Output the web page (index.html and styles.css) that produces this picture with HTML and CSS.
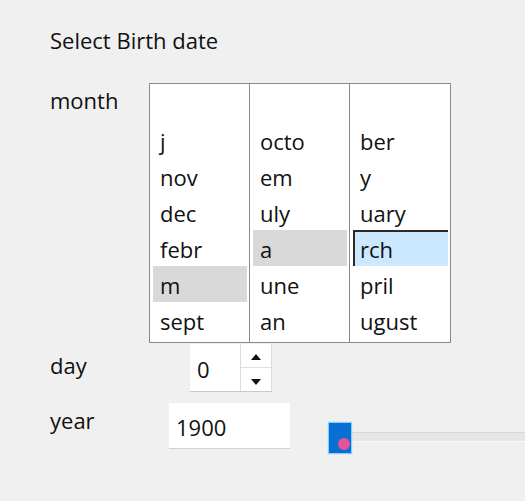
FILE: index.html
```html
<!DOCTYPE html>
<html>
<head>
<meta charset="utf-8">
<link rel="stylesheet" href="styles.css">
</head>
<body>
<div class="page">
  <div class="title">Select Birth date</div>
  <div class="month-row">
    <div class="label month-label">month</div>
    <div class="list">
      <div class="col">
        <div class="item">j</div>
        <div class="item">nov</div>
        <div class="item">dec</div>
        <div class="item">febr</div>
        <div class="item sel">m</div>
        <div class="item">sept</div>
      </div>
      <div class="col">
        <div class="item">octo</div>
        <div class="item">em</div>
        <div class="item">uly</div>
        <div class="item sel">a</div>
        <div class="item">une</div>
        <div class="item">an</div>
      </div>
      <div class="col last">
        <div class="item">ber</div>
        <div class="item">y</div>
        <div class="item">uary</div>
        <div class="item focus">rch</div>
        <div class="item">pril</div>
        <div class="item">ugust</div>
      </div>
    </div>
  </div>
  <div class="day-row">
    <div class="label">day</div>
    <div class="spin">
      <div class="spin-value">0</div>
      <div class="spin-buttons">
        <div class="spin-btn"><span class="arrow up"></span></div>
        <div class="spin-btn"><span class="arrow down"></span></div>
      </div>
    </div>
  </div>
  <div class="year-row">
    <div class="label">year</div>
    <div class="year-box">1900</div>
    <div class="slider">
      <div class="thumb"><span class="dot"></span></div>
      <div class="track"></div>
    </div>
  </div>
</div>
</body>
</html>
```

FILE: styles.css
```css
html, body {
  margin: 0;
  padding: 0;
  background: #f0f0f0;
  overflow: hidden;
}
body {
  width: 525px;
  height: 501px;
  font-family: "Open Sans", "Noto Sans", sans-serif;
  font-size: 22px;
  color: #111;
}
.page {
  padding: 25px 0 0 50px;
}
.title {
  height: 30px;
  line-height: 30px;
}
.month-row {
  display: flex;
  margin-top: 28px;
}
.label {
  width: 99px;
  line-height: 30px;
}
.month-label {
  margin-top: 2px;
}
.list {
  display: flex;
  background: #fff;
  border: 1px solid #8a8a8a;
  padding: 38px 0 4px 0;
}
.col {
  width: 99px;
  border-right: 1px solid #8a8a8a;
  margin-top: -38px;
  margin-bottom: -4px;
  padding-top: 38px;
  padding-bottom: 4px;
}
.col.last {
  width: 100px;
  border-right: none;
}
.item {
  height: 36px;
  line-height: 38px;
  margin: 0 2px 0 3px;
  padding-left: 7px;
  box-sizing: border-box;
}
.item.sel {
  background: #d9d9d9;
}
.item.focus {
  background: #cce8ff;
  border-top: 2px solid #2a2a2a;
  border-left: 2px solid #2a2a2a;
  padding-left: 5px;
  line-height: 35px;
}
.day-row {
  display: flex;
  align-items: center;
  margin-top: 1px;
}
.day-row .label {
  width: 140px;
  margin-top: -6px;
}
.spin {
  display: flex;
  height: 48px;
  background: #fff;
  border-bottom: 1px solid #c8c8c8;
  box-sizing: border-box;
}
.spin-value {
  width: 50px;
  padding-left: 7px;
  box-sizing: border-box;
  line-height: 50px;
}
.spin-buttons {
  display: flex;
  flex-direction: column;
  width: 32px;
  border-left: 1px solid #dcdcdc;
  border-right: 1px solid #dcdcdc;
  box-sizing: border-box;
}
.spin-btn {
  flex: 1;
  display: flex;
  align-items: center;
  justify-content: center;
}
.spin-btn + .spin-btn {
  border-top: 1px solid #e0e0e0;
}
.arrow {
  width: 0;
  height: 0;
  border-left: 5px solid transparent;
  border-right: 5px solid transparent;
}
.arrow.up {
  border-bottom: 6px solid #111;
  margin-top: 2px;
}
.arrow.down {
  border-top: 6px solid #111;
  margin-top: 4px;
}
.year-row {
  display: flex;
  align-items: flex-start;
  margin-top: 11px;
}
.year-row .label {
  width: 119px;
  margin-top: 2px;
}
.year-box {
  width: 121px;
  height: 46px;
  line-height: 48px;
  background: #fff;
  padding-left: 7px;
  box-sizing: border-box;
  border-bottom: 1px solid #d0d0d0;
}
.slider {
  display: flex;
  align-items: flex-start;
  margin-left: 39px;
  margin-top: 20px;
  flex: 1;
}
.thumb {
  position: relative;
  width: 22px;
  height: 30px;
  background: #0a6fd2;
  box-shadow: 0 0 1px 1px #7fd4ff;
}
.dot {
  position: absolute;
  left: 9px;
  top: 15px;
  width: 12px;
  height: 12px;
  border-radius: 50%;
  background: #e4529c;
}
.track {
  flex: 1;
  height: 8px;
  margin-top: 9px;
  background: #e6e6e6;
  border-top: 1px solid #d8d8d8;
  border-bottom: 1px solid #f8f8f8;
}
```
